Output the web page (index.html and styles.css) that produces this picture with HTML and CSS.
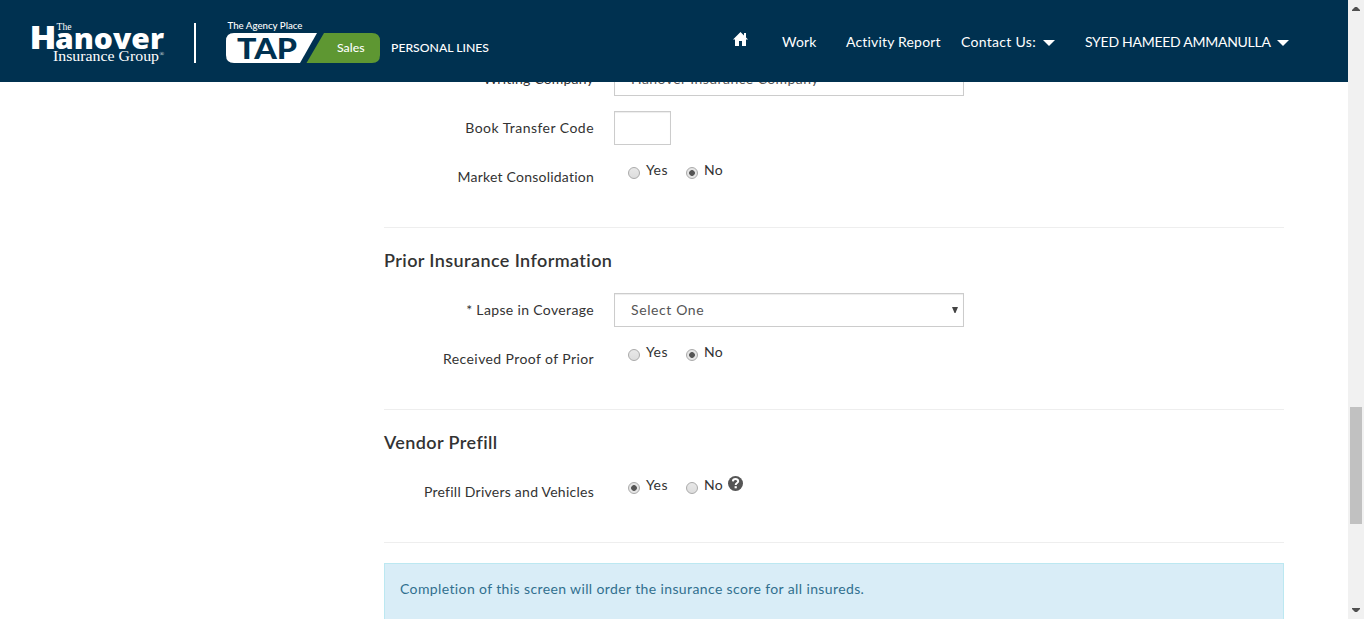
FILE: index.html
```html
<!DOCTYPE html>
<html lang="en">
<head>
<meta charset="utf-8">
<title>TAP Sales - Personal Lines</title>
<link rel="stylesheet" href="styles.css">
</head>
<body>
<div class="page">
  <header class="header">
    <svg class="brand" width="500" height="82" viewBox="0 0 500 82" role="img" aria-label="The Hanover Insurance Group, TAP Sales">
      <g fill="#fff">
        <text class="serif" x="56.500" y="30" font-size="10" textLength="15" lengthAdjust="spacingAndGlyphs">The</text>
        <text class="humanist" x="29.500" y="49" font-size="31" textLength="27" lengthAdjust="spacingAndGlyphs">H</text>
        <text class="humanist" x="55" y="49" font-size="29" textLength="109" lengthAdjust="spacingAndGlyphs">anover</text>
        <text class="serif" x="53" y="60.500" font-size="15" textLength="106" lengthAdjust="spacingAndGlyphs">Insurance Group</text>
        <text class="serif" x="159.500" y="56" font-size="6">®</text>
        <rect x="194" y="23" width="2" height="40"/>
        <text class="small-brand" x="227.500" y="29" font-size="9" textLength="75" lengthAdjust="spacingAndGlyphs">The Agency Place</text>
        <path d="M234 33H317L300 63H234Q226 63 226 55V41Q226 33 234 33Z"/>
      </g>
      <path d="M324 33H372Q380 33 380 41V55Q380 63 372 63H306.500Z" fill="#5e9732"/>
      <text class="heavy" x="237" y="59" font-size="28.500" fill="#003150" textLength="60" lengthAdjust="spacingAndGlyphs">TAP</text>
      <text class="small-brand" x="337" y="52" font-size="11.500" fill="#fff" textLength="27.500" lengthAdjust="spacingAndGlyphs">Sales</text>
      <text class="small-brand" x="391" y="52" font-size="12" fill="#fff" textLength="98" lengthAdjust="spacingAndGlyphs">PERSONAL LINES</text>
    </svg>
    <nav class="nav">
      <a class="home"><svg width="16" height="15" viewBox="0 0 16 15"><path d="M7.500 0L0 7.500H2V14H6V9H9V14H13V7.500H15L13 5.500V1H11V3.500Z" fill="#fff"/></svg></a>
      <a class="work">Work</a>
      <a class="report">Activity Report</a>
      <a class="contact">Contact Us:</a>
      <svg class="caret" width="12" height="6" viewBox="0 0 12 6"><path d="M0 0H12L6 6Z" fill="#fff"/></svg>
      <a class="user">SYED HAMEED AMMANULLA</a>
      <svg class="caret" width="12" height="6" viewBox="0 0 12 6"><path d="M0 0H12L6 6Z" fill="#fff"/></svg>
    </nav>
  </header>
  <main class="form">
    <section class="section first">
      <div class="row"><label class="label t-writing">Writing Company</label><div class="control wide"><span class="t-hanover">Hanover Insurance Company</span></div></div>
      <div class="row"><label class="label t-book">Book Transfer Code</label><div class="control code"></div></div>
      <div class="row"><label class="label t-market">Market Consolidation</label><div class="radios"><i class="radio"></i><span class="yes">Yes</span><i class="radio on"></i><span>No</span></div></div>
    </section>
    <section class="section">
      <h2 class="t-prior">Prior Insurance Information</h2>
      <div class="row"><label class="label t-lapse">* Lapse in Coverage</label><div class="control wide"><span class="t-select">Select One</span><svg width="6" height="6" viewBox="0 0 6 6"><path d="M0 0H6L3.500 6H2.500Z" fill="#444"/></svg></div></div>
      <div class="row"><label class="label t-proof">Received Proof of Prior</label><div class="radios"><i class="radio"></i><span class="yes">Yes</span><i class="radio on"></i><span>No</span></div></div>
    </section>
    <section class="section">
      <h2 class="t-vendor">Vendor Prefill</h2>
      <div class="row"><label class="label t-prefill">Prefill Drivers and Vehicles</label><div class="radios"><i class="radio on"></i><span class="yes">Yes</span><i class="radio"></i><span>No</span>
        <svg class="help" width="15" height="15" viewBox="0 0 15 15"><circle cx="7.500" cy="7.500" r="7.500" fill="#555"/><path d="M4.900 5.400C5 2.400 10.200 2.300 10.200 5.300C10.200 7.100 7.700 7 7.700 9" fill="none" stroke="#fff" stroke-width="2"/><path d="M6.600 10.200H8.800V12.300H6.600Z" fill="#fff"/></svg></div></div>
    </section>
    <div class="alert"><span>Completion of this screen will order the insurance score for all insureds.</span></div>
  </main>
  <aside class="scrollbar">
    <svg width="8" height="4" viewBox="0 0 8 4"><path d="M0 4H8V3L5 0H3L0 3Z" fill="#505050"/></svg>
    <div class="thumb"></div>
    <svg class="down" width="8" height="4" viewBox="0 0 8 4"><path d="M0 0H8V1L5 4H3L0 1Z" fill="#505050"/></svg>
  </aside>
</div>
</body>
</html>
```
FILE: styles.css
```css
* { box-sizing: border-box; }
body { margin: 0; overflow: hidden; background: #fff; color: #333; font: 14px/20px Lato, "Open Sans", sans-serif; letter-spacing: .4px; }
.page { display: grid; grid-template-columns: 1348px 16px; grid-template-rows: 82px 537px; width: 1364px; height: 619px; overflow: hidden; }
.header { position: relative; z-index: 1; grid-column: 1; grid-row: 1; display: flex; background: #003150; }
.brand { flex: none; letter-spacing: 0; }
.serif { font-family: "Liberation Serif", serif; }
.heavy { font-family: Lato, sans-serif; font-weight: 900; }
.humanist { font-family: "Open Sans", sans-serif; font-weight: 800; }
.small-brand { font-family: Lato, sans-serif; font-weight: 500; }
.nav { display: flex; align-items: center; height: 82px; padding: 1px 0 0 233px; color: #fff; white-space: nowrap; }
.nav a { flex: none; }
.home { width: 49px; height: 20px; }
.work { width: 64px; letter-spacing: .2px; }
.report { width: 115px; letter-spacing: .18px; }
.contact { width: 82px; letter-spacing: .3px; }
.user { width: 192px; margin-left: 30px; letter-spacing: -.27px; }
.caret { flex: none; margin-top: 3px; }
.form { grid-column: 1; grid-row: 2; width: 900px; margin: -20px 0 0 384px; }
.section { padding-bottom: 18px; border-bottom: 1px solid #eee; }
.row { display: flex; height: 34px; margin-bottom: 15px; }
.label { width: 210px; margin-right: 20px; line-height: 34px; text-align: right; white-space: nowrap; }
.t-writing { letter-spacing: .2px; }
.t-book { letter-spacing: .46px; }
.t-market { letter-spacing: .23px; }
.t-lapse { letter-spacing: .35px; }
.t-prefill { letter-spacing: .25px; }
.t-select { letter-spacing: .6px; }
.t-hanover { letter-spacing: .44px; }
h2 { height: 65px; margin: 0; padding-top: 22px; font-size: 18px; line-height: 20px; font-weight: 600; }
.control { display: flex; align-items: center; justify-content: space-between; height: 34px; padding: 0 5px 0 16px; border: 1px solid #ccc; color: #555; box-shadow: inset 0 1px 1px rgba(0,0,0,.075); }
.wide { width: 350px; }
.code { width: 57px; }
.radios { display: flex; height: 20px; padding-left: 14px; }
.radio { width: 12px; height: 12px; margin: 7px 6px 0 0; border: 1px solid #aaa; border-radius: 50%; background: linear-gradient(#e8e8e8, #ddd); }
.radio.on { background: radial-gradient(circle, #555 0 2.5px, #e5e5e5 3.2px); }
.yes { width: 40px; }
.help { margin: 1px 0 0 5px; }
.alert { height: 76px; margin-top: 20px; padding: 15px; border: 1px solid #bce8f1; background: #d9edf7; color: #31708f; letter-spacing: .38px; white-space: nowrap; }
.scrollbar { grid-column: 2; grid-row: 1 / 3; display: flex; flex-direction: column; align-items: center; padding: 7px 0; background: #f1f1f1; }
.thumb { width: 12px; height: 117px; margin-top: 396px; background: #c1c1c1; }
.down { margin-top: auto; }
```
